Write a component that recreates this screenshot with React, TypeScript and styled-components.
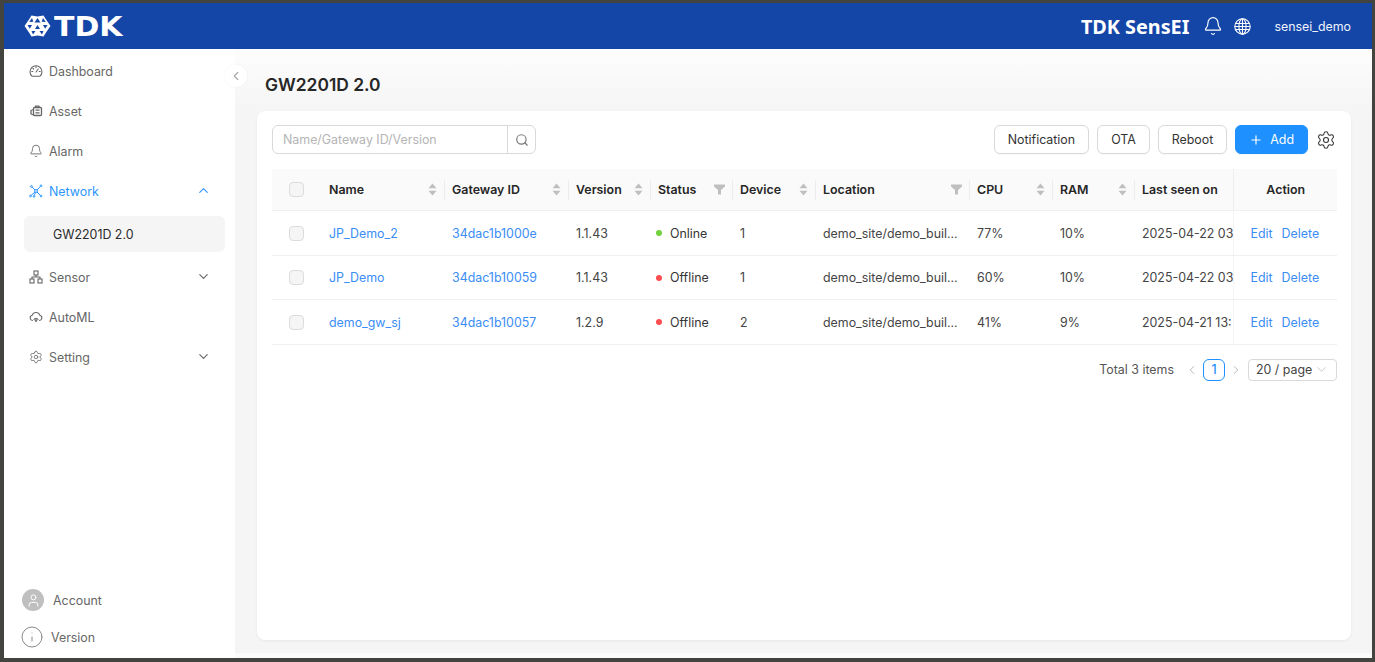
import React from 'react';
import styled, { createGlobalStyle } from 'styled-components';
import { Bell, ChevronDown, ChevronLeft, ChevronRight, ChevronUp, Info, Plus, Search, Settings, User } from 'lucide-react';

const GlobalStyle = createGlobalStyle`
  html, body { margin: 0; padding: 0; height: 100%; background: #434340; }
  body { font-family: Inter, "Liberation Sans", sans-serif; font-size: 12.4px; color: #333; overflow: hidden; }
  * { box-sizing: border-box; }
`;

const Frame = styled.div`
  width: 1375px;
  height: 662px;
  padding: 3px 3px 4px 4px;
  background: #434340;
`;

const Screen = styled.div`
  height: 100%;
  display: flex;
  flex-direction: column;
  background: #fbfbfb;
`;

const Header = styled.header`
  height: 46px;
  flex: none;
  display: flex;
  align-items: center;
  justify-content: space-between;
  padding: 0 21px 0 20px;
  background: #1446a8;
  color: #fff;
`;

const Logo = styled.div`
  display: flex;
  align-items: center;
  gap: 3px;
`;

const LogoWord = styled.span`
  display: inline-block;
  font-family: "DejaVu Sans", sans-serif;
  font-weight: 700;
  font-size: 27px;
  line-height: 1;
  transform: scaleX(1.11);
  transform-origin: left center;
`;

const HeaderRight = styled.div`
  display: flex;
  align-items: center;
`;

const Product = styled.span`
  font-family: "Noto Sans", sans-serif;
  font-weight: 700;
  font-size: 19.8px;
  margin-right: 14px;
`;

const BellWrap = styled.span`
  display: flex;
  margin-right: 11px;
`;

const UserName = styled.span`
  font-size: 12.4px;
  margin-left: 23px;
  color: #f0f4fc;
`;

const Body = styled.div`
  flex: 1;
  min-height: 0;
  display: flex;
`;

const Sidebar = styled.aside`
  position: relative;
  width: 231px;
  flex: none;
  display: flex;
  flex-direction: column;
  justify-content: space-between;
  background: #fff;
  padding: 2px 10px 0 20px;
`;

const Collapse = styled.button`
  position: absolute;
  top: 16px;
  right: -12px;
  width: 22px;
  height: 22px;
  padding: 0;
  border: 0;
  border-radius: 50%;
  display: flex;
  align-items: center;
  justify-content: center;
  background: #fff;
  color: #a8a8a8;
  box-shadow: 0 0 3px rgba(0, 0, 0, 0.05);
`;

const NavList = styled.nav`
  display: flex;
  flex-direction: column;
`;

const NavItem = styled.div<{ $active?: boolean }>`
  height: 40px;
  display: flex;
  align-items: center;
  gap: 6px;
  padding: 0 0 0 5px;
  margin-right: 14.5px;
  font-size: 12.4px;
  color: ${p => (p.$active ? '#2d95ff' : '#666')};
`;

const NavLabel = styled.span`
  flex: 1;
`;

const Caret = styled.span`
  display: flex;
  margin-bottom: 2px;
`;

const SubItem = styled.div`
  height: 36px;
  margin: 5px 14.5px 5px 0;
  margin-right: 0;
  border-radius: 6px;
  background: #f5f5f5;
  display: flex;
  align-items: center;
  padding-left: 29px;
  font-size: 12.4px;
  color: #2b2b2b;
`;

const SideFooter = styled.div`
  display: flex;
  flex-direction: column;
  gap: 16px;
  margin-left: -2px;
  padding-bottom: 11px;
`;

const FooterRow = styled.div`
  display: flex;
  align-items: center;
  gap: 9px;
  font-size: 12.4px;
  color: #666;
`;

const Avatar = styled.span`
  width: 22px;
  height: 22px;
  border-radius: 50%;
  background: #bfbfbf;
  color: #fff;
  display: flex;
  align-items: center;
  justify-content: center;
`;

const InfoWrap = styled.span`
  display: flex;
  margin: -2px;
  color: #8a8a8a;
`;

const Main = styled.main`
  flex: 1;
  min-width: 0;
  margin-bottom: 5px;
  padding: 25px 21px 13px 22px;
  display: flex;
  flex-direction: column;
  background: linear-gradient(#fdfdfd, #f5f5f5 60px);
`;

const Title = styled.h1`
  margin: 0 0 15px 8px;
  height: 22px;
  line-height: 22px;
  font-size: 17.4px;
  font-weight: 600;
  color: #262626;
`;

const Card = styled.section`
  flex: 1;
  background: #fff;
  border-radius: 8px;
  padding: 14px 14px 0 15px;
  box-shadow: 0 1px 3px rgba(0, 0, 0, 0.06);
`;

const Toolbar = styled.div`
  display: flex;
  align-items: center;
  justify-content: space-between;
  height: 29px;
  margin-bottom: 15px;
`;

const SearchBox = styled.div`
  display: flex;
  width: 264px;
  height: 29px;
  border: 1px solid #d9d9d9;
  border-radius: 6px;
`;

const SearchText = styled.span`
  flex: 1;
  padding-left: 10px;
  line-height: 27px;
  font-size: 12.4px;
  color: #b5b5b5;
`;

const SearchButton = styled.span`
  width: 28px;
  border-left: 1px solid #d9d9d9;
  display: flex;
  align-items: center;
  justify-content: center;
  color: #777;
`;

const Actions = styled.div`
  display: flex;
  align-items: center;
  gap: 8px;
`;

const Button = styled.button<{ $primary?: boolean }>`
  height: 29px;
  padding: 0 13px;
  display: flex;
  align-items: center;
  gap: 7px;
  border-radius: 6px;
  font-family: inherit;
  font-size: 12.4px;
  border: 1px solid ${p => (p.$primary ? '#1e90ff' : '#d9d9d9')};
  background: ${p => (p.$primary ? '#1e90ff' : '#fff')};
  color: ${p => (p.$primary ? '#fff' : '#333')};
  box-shadow: 0 1px 1px rgba(0, 0, 0, 0.03);
`;

const GearWrap = styled.span`
  display: flex;
  margin-right: 1px;
  color: #333;
`;

const Table = styled.table`
  width: 1065px;
  table-layout: fixed;
  border-collapse: collapse;
`;

const Th = styled.th<{ $divider?: boolean; $center?: boolean; $pin?: boolean }>`
  position: relative;
  height: 41.5px;
  padding: 0 7px 0 8px;
  background: #fafafa;
  border-bottom: 1px solid #f0f0f0;
  font-size: 12.4px;
  font-weight: 600;
  color: #262626;
  text-align: ${p => (p.$center ? 'center' : 'left')};
  border-left: ${p => (p.$pin ? '1px solid #eeeeee' : '0')};
  box-shadow: ${p => (p.$pin ? '-3px 0 4px -2px rgba(0,0,0,0.05)' : 'none')};

  &::before {
    content: ${p => (p.$divider ? '""' : 'none')};
    position: absolute;
    left: 0;
    top: 11px;
    height: 20px;
    width: 1px;
    background: #ececec;
  }
`;

const ThInner = styled.span`
  display: flex;
  align-items: center;
  justify-content: space-between;
`;

const Td = styled.td<{ $pin?: boolean }>`
  height: 44.5px;
  padding: 1px 8px 0;
  border-bottom: 1px solid #f0f0f0;
  font-size: 12.4px;
  color: #444;
  white-space: nowrap;
  overflow: hidden;
  border-left: ${p => (p.$pin ? '1px solid #f4f4f4' : '0')};
  box-shadow: ${p => (p.$pin ? '-3px 0 4px -2px rgba(0,0,0,0.05)' : 'none')};
`;

const CheckCell = styled.span`
  display: block;
  width: 15px;
  height: 15px;
  margin-left: 9px;
  border: 1px solid #dcdcdc;
  border-radius: 4px;
  background: #f5f5f5;
`;

const Link = styled.a`
  color: #3a8df5;
  text-decoration: none;
`;

const ActionLink = styled(Link)`
  margin-right: 9px;
`;

const ActionCell = styled.span`
  display: block;
  padding-left: 9px;
`;

const StatusWrap = styled.span`
  display: flex;
  align-items: center;
  gap: 8px;
  margin-left: -2px;
  color: #333;
`;

const Dot = styled.span<{ $color: string }>`
  width: 6px;
  height: 6px;
  border-radius: 50%;
  background: ${p => p.$color};
`;

const Pager = styled.div`
  display: flex;
  align-items: center;
  justify-content: flex-end;
  margin-top: 14px;
  height: 22px;
  font-size: 12.4px;
  color: #555;
`;

const PageNumber = styled.span`
  width: 22px;
  height: 22px;
  margin: 0 4px;
  border: 1px solid #1e90ff;
  border-radius: 6px;
  display: flex;
  align-items: center;
  justify-content: center;
  color: #1e90ff;
  font-weight: 500;
`;

const PagerArrow = styled.span`
  display: flex;
  color: #b0b0b0;
`;

const PageSize = styled.span`
  width: 89px;
  height: 22px;
  margin-left: 5px;
  padding: 0 7px;
  border: 1px solid #d9d9d9;
  border-radius: 4px;
  display: flex;
  align-items: center;
  justify-content: space-between;
  color: #444;
`;

const Total = styled.span`
  margin-right: 11px;
`;

const SortIcon = () => (
  <svg width="9" height="13" viewBox="0 0 9 13" fill="#bfbfbf">
    <path d="M4.5 0.5 8.5 5.2H0.5Z" />
    <path d="M4.5 12.5 0.5 7.8H8.5Z" />
  </svg>
);

const FilterIcon = () => (
  <svg width="11" height="11" viewBox="0 0 11 11" fill="#bfbfbf">
    <path d="M0 0.5H11V2.5L7 6V10.5H4V6L0 2.5Z" />
  </svg>
);

const LogoMark = () => (
  <svg width="27" height="22" viewBox="0 0 27 22">
    <path d="M7.5 0.5 13.5 1.5 19.5 0.5 22 4.5 26.5 11 22 17.5 19.5 21.5 13.5 20.5 7.5 21.5 5 17.5 0.5 11 5 4.5Z" fill="#fff" />
    <path d="M13.5 3 16.5 7.5H10.5Z M8 3 9.3 6.8 5.2 7Z M19 3 21.8 7 17.7 6.8Z M3.5 10 8 10 5.8 13.8Z M23.5 10 21.2 13.8 19 10Z M13.5 10 16 14H11Z M7.5 16 11.5 16 9 19.5Z M19.5 16 18 19.5 15.5 16Z" fill="#1446a8" />
  </svg>
);

const GlobeIcon = () => (
  <svg width="17" height="17" viewBox="0 0 17 17" fill="none" stroke="currentColor" strokeWidth="1.1">
    <circle cx="8.5" cy="8.5" r="7.7" />
    <ellipse cx="8.5" cy="8.5" rx="3.6" ry="7.7" />
    <path d="M8.5 0.8V16.2M1.6 5.5H15.4M0.8 8.5H16.2M1.6 11.5H15.4" />
  </svg>
);

const DashboardIcon = () => (
  <svg width="14" height="14" viewBox="0 0 14 14" fill="none" stroke="currentColor" strokeWidth="1.1" strokeLinecap="round">
    <path d="M3 12.2A6 6 0 1 1 11 12.2Z" strokeLinejoin="round" />
    <path d="M7 8 9.2 5M2.8 7.5H3.8M10.2 7.5H11.2M7 2.8V3.8M4 4.5 4.7 5.2" />
  </svg>
);

const AssetIcon = () => (
  <svg width="14" height="14" viewBox="0 0 14 14" fill="none" stroke="currentColor" strokeWidth="1.3" strokeLinejoin="round">
    <rect x="4.5" y="3.5" width="8" height="8" rx="1" />
    <path d="M6.5 3.5V2.2H10V3.5M6.5 6.2H10.5M6.5 8.8H10.5M4.5 5.5 2 6.5V10L4.5 11" />
  </svg>
);

const NetworkIcon = () => (
  <svg width="14" height="14" viewBox="0 0 14 14" fill="none" stroke="currentColor" strokeWidth="1">
    <circle cx="7" cy="7" r="1.4" />
    <circle cx="2.4" cy="2.4" r="0.9" />
    <circle cx="12" cy="1.8" r="0.9" />
    <circle cx="1.5" cy="12" r="0.9" />
    <circle cx="5" cy="12.4" r="0.9" />
    <circle cx="12" cy="12" r="0.9" />
    <path d="M3 3 6 6M11.4 2.5 8 6M2.2 11.3 6 8M5.3 11.5 6.5 8.4M11.4 11.4 8 8" />
  </svg>
);

const SensorIcon = () => (
  <svg width="14" height="14" viewBox="0 0 14 14" fill="none" stroke="currentColor" strokeWidth="1.1">
    <rect x="5" y="1" width="4" height="4" />
    <rect x="1" y="9" width="4" height="4" />
    <rect x="9" y="9" width="4" height="4" />
    <path d="M7 5V7M3 9V7H11V9" />
  </svg>
);

const AutoMlIcon = () => (
  <svg width="14" height="14" viewBox="0 0 14 14" fill="none" stroke="currentColor" strokeWidth="1.1" strokeLinecap="round">
    <path d="M3.5 10.5A2.7 2.7 0 0 1 3.2 5.2 4 4 0 0 1 10.8 5.2 2.7 2.7 0 0 1 10.5 10.5" />
    <path d="M5 9.5A2.2 2.2 0 0 1 9 9.5" />
    <circle cx="7" cy="10.5" r="0.8" />
  </svg>
);

const rows = [
  { name: 'JP_Demo_2', id: '34dac1b1000e', ver: '1.1.43', online: true, device: '1', cpu: '77%', ram: '10%', seen: '2025-04-22 03:' },
  { name: 'JP_Demo', id: '34dac1b10059', ver: '1.1.43', online: false, device: '1', cpu: '60%', ram: '10%', seen: '2025-04-22 03:' },
  { name: 'demo_gw_sj', id: '34dac1b10057', ver: '1.2.9', online: false, device: '2', cpu: '41%', ram: '9%', seen: '2025-04-21 13:' },
];

const columns: { title: string; width: number; icon: 'sort' | 'filter' | null }[] = [
  { title: 'Name', width: 123, icon: 'sort' },
  { title: 'Gateway ID', width: 124, icon: 'sort' },
  { title: 'Version', width: 82, icon: 'sort' },
  { title: 'Status', width: 82, icon: 'filter' },
  { title: 'Device', width: 83, icon: 'sort' },
  { title: 'Location', width: 154, icon: 'filter' },
  { title: 'CPU', width: 83, icon: 'sort' },
  { title: 'RAM', width: 82, icon: 'sort' },
  { title: 'Last seen on', width: 99, icon: null },
];

export default function App() {
  return (
    <>
      <GlobalStyle />
      <Frame>
        <Screen>
          <Header>
            <Logo>
              <LogoMark />
              <LogoWord>TDK</LogoWord>
            </Logo>
            <HeaderRight>
              <Product>TDK SensEI</Product>
              <BellWrap><Bell size={20} strokeWidth={1.4} /></BellWrap>
              <GlobeIcon />
              <UserName>sensei_demo</UserName>
            </HeaderRight>
          </Header>
          <Body>
            <Sidebar>
              <Collapse><ChevronLeft size={14} /></Collapse>
              <NavList>
                <NavItem><DashboardIcon /><NavLabel>Dashboard</NavLabel></NavItem>
                <NavItem><AssetIcon /><NavLabel>Asset</NavLabel></NavItem>
                <NavItem><Bell size={14} strokeWidth={1.5} /><NavLabel>Alarm</NavLabel></NavItem>
                <NavItem $active><NetworkIcon /><NavLabel>Network</NavLabel><Caret><ChevronUp size={15} strokeWidth={1.8} /></Caret></NavItem>
                <SubItem>GW2201D 2.0</SubItem>
                <NavItem><SensorIcon /><NavLabel>Sensor</NavLabel><Caret><ChevronDown size={15} strokeWidth={1.8} /></Caret></NavItem>
                <NavItem><AutoMlIcon /><NavLabel>AutoML</NavLabel></NavItem>
                <NavItem><Settings size={14} strokeWidth={1.4} /><NavLabel>Setting</NavLabel><Caret><ChevronDown size={15} strokeWidth={1.8} /></Caret></NavItem>
              </NavList>
              <SideFooter>
                <FooterRow><Avatar><User size={15} strokeWidth={1.6} /></Avatar>Account</FooterRow>
                <FooterRow><InfoWrap><Info size={24} strokeWidth={1} /></InfoWrap>Version</FooterRow>
              </SideFooter>
            </Sidebar>
            <Main>
              <Title>GW2201D 2.0</Title>
              <Card>
                <Toolbar>
                  <SearchBox>
                    <SearchText>Name/Gateway ID/Version</SearchText>
                    <SearchButton><Search size={14} /></SearchButton>
                  </SearchBox>
                  <Actions>
                    <Button>Notification</Button>
                    <Button>OTA</Button>
                    <Button>Reboot</Button>
                    <Button $primary><Plus size={14} />Add</Button>
                    <GearWrap><Settings size={20} strokeWidth={1.3} /></GearWrap>
                  </Actions>
                </Toolbar>
                <Table>
                  <colgroup>
                    <col style={{ width: 49 }} />
                    {columns.map(c => <col key={c.title} style={{ width: c.width }} />)}
                    <col style={{ width: 104 }} />
                  </colgroup>
                  <thead>
                    <tr>
                      <Th><CheckCell /></Th>
                      {columns.map((c, i) => (
                        <Th key={c.title} $divider={i > 0}>
                          <ThInner>
                            {c.title}
                            {c.icon === 'sort' && <SortIcon />}
                            {c.icon === 'filter' && <FilterIcon />}
                          </ThInner>
                        </Th>
                      ))}
                      <Th $center $pin>Action</Th>
                    </tr>
                  </thead>
                  <tbody>
                    {rows.map(r => (
                      <tr key={r.name}>
                        <Td><CheckCell /></Td>
                        <Td><Link>{r.name}</Link></Td>
                        <Td><Link>{r.id}</Link></Td>
                        <Td>{r.ver}</Td>
                        <Td>
                          <StatusWrap>
                            <Dot $color={r.online ? '#73d13d' : '#ff4d4f'} />
                            {r.online ? 'Online' : 'Offline'}
                          </StatusWrap>
                        </Td>
                        <Td>{r.device}</Td>
                        <Td>demo_site/demo_buil...</Td>
                        <Td>{r.cpu}</Td>
                        <Td>{r.ram}</Td>
                        <Td>{r.seen}</Td>
                        <Td $pin>
                          <ActionCell>
                            <ActionLink>Edit</ActionLink>
                            <Link>Delete</Link>
                          </ActionCell>
                        </Td>
                      </tr>
                    ))}
                  </tbody>
                </Table>
                <Pager>
                  <Total>Total 3 items</Total>
                  <PagerArrow><ChevronLeft size={14} strokeWidth={1.5} /></PagerArrow>
                  <PageNumber>1</PageNumber>
                  <PagerArrow><ChevronRight size={14} strokeWidth={1.5} /></PagerArrow>
                  <PageSize>20 / page<ChevronDown size={15} strokeWidth={1.2} color="#bbb" /></PageSize>
                </Pager>
              </Card>
            </Main>
          </Body>
        </Screen>
      </Frame>
    </>
  );
}
